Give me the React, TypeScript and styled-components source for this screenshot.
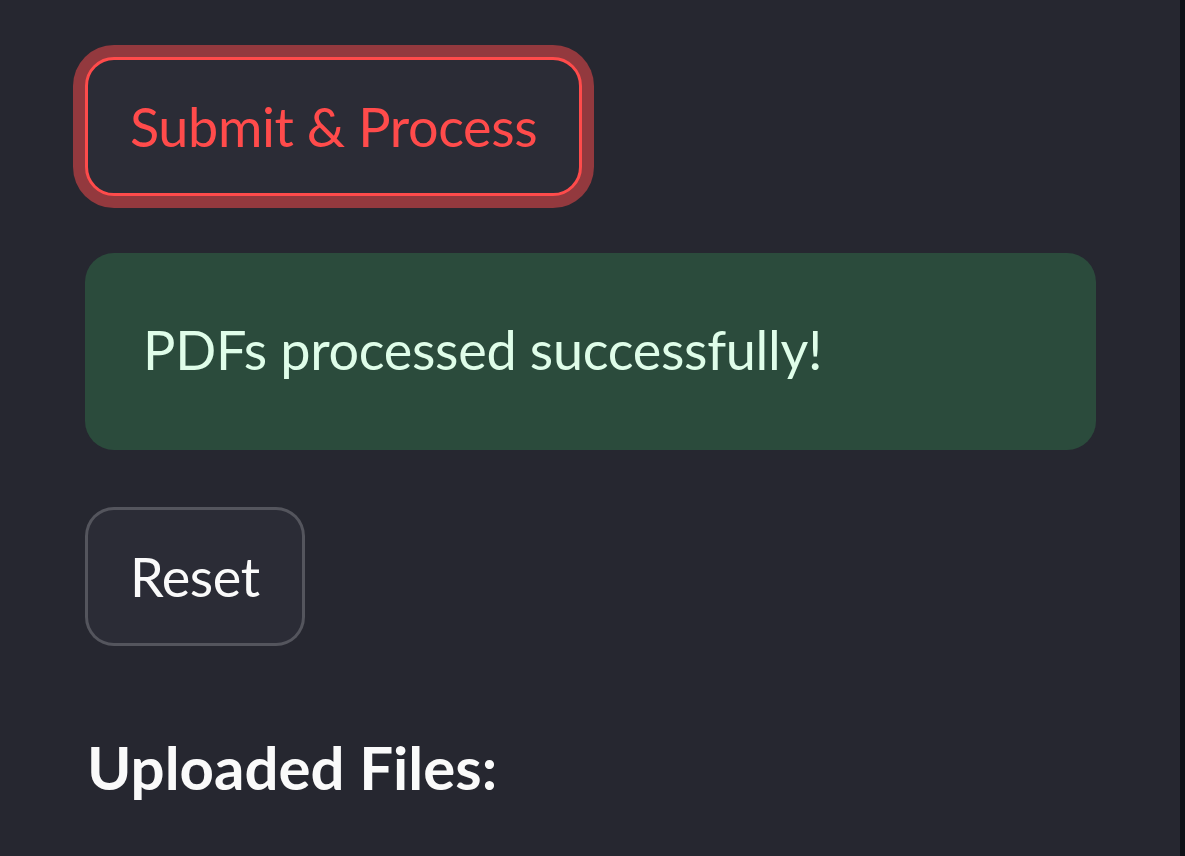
import React from "react";
import styled, { createGlobalStyle } from "styled-components";

const Global = createGlobalStyle`
  html, body { margin: 0; padding: 0; background: #0e1117; }
  body { font-family: Lato, "Open Sans", sans-serif; }
`;

const Page = styled.div`
  display: flex;
  width: 1185px;
  height: 856px;
  overflow: hidden;
  background: #0e1117;
`;

const Sidebar = styled.aside`
  width: 1180px;
  flex: none;
  background: #262730;
  padding: 57px 0 0 85px;
  box-sizing: border-box;
  display: flex;
  flex-direction: column;
  align-items: flex-start;
  & > * { flex: none; }
`;

const Button = styled.button<{ $primary?: boolean }>`
  height: 139px;
  box-sizing: border-box;
  padding: 0 42px;
  border-radius: 29px;
  font-family: Lato, sans-serif;
  font-size: 54px;
  font-weight: 400;
  letter-spacing: -0.4px;
  background: #2b2c36;
  cursor: pointer;
  border: 3.5px solid ${(p) => (p.$primary ? "#ff4b4b" : "rgba(250,250,250,0.2)")};
  color: ${(p) => (p.$primary ? "#ff4b4b" : "#fafafa")};
  box-shadow: ${(p) => (p.$primary ? "0 0 0 12px rgba(255, 75, 75, 0.5)" : "none")};
  margin-bottom: 57px;
`;

const Alert = styled.div`
  width: 1011px;
  height: 197px;
  box-sizing: border-box;
  border-radius: 29px;
  background: #2b4b3c;
  color: #dffde9;
  font-family: Lato, sans-serif;
  font-size: 54px;
  letter-spacing: -0.3px;
  padding: 0 58px 4px;
  display: flex;
  align-items: center;
  margin-bottom: 57px;
`;

const Heading = styled.h3`
  margin: 28px 0 0 2px;
  font-family: Lato, sans-serif;
  font-weight: 700;
  font-size: 60px;
  color: #fafafa;
  line-height: 1.2;
`;

export default function App() {
  return (
    <Page>
      <Global />
      <Sidebar>
        <Button $primary>Submit &amp; Process</Button>
        <Alert>PDFs processed successfully!</Alert>
        <Button>Reset</Button>
        <Heading>Uploaded Files:</Heading>
      </Sidebar>
    </Page>
  );
}
